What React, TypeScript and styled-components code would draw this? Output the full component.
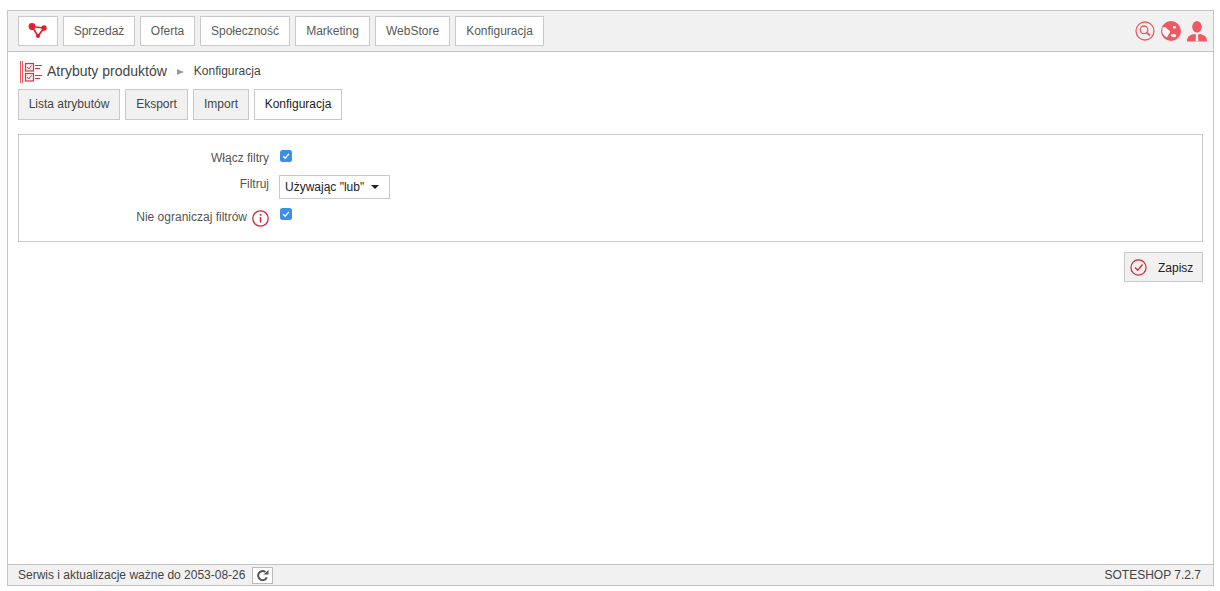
import React from 'react';
import styled, { createGlobalStyle } from 'styled-components';

const Global = createGlobalStyle`
  html, body { margin: 0; padding: 0; background: #fff; }
  body { font-family: "Liberation Sans", Arial, sans-serif; font-size: 12px; color: #4a4a4a; }
`;
const Frame = styled.div`
  box-sizing: border-box; width: 1207px; height: 576px; margin: 10px 0 0 7px;
  border: 1px solid #c4c4c4; display: flex; flex-direction: column;
`;
const Header = styled.header`
  box-sizing: border-box; height: 41px; flex: none; background: #f1f1f1; border-bottom: 1px solid #c4c4c4;
  display: flex; align-items: flex-start; padding: 5px 6px 0 10px; justify-content: space-between;
`;
const Nav = styled.nav`display: flex; gap: 5px;`;
const NavButton = styled.a<{ $w: number }>`
  box-sizing: border-box; width: ${p => p.$w}px; height: 30px; background: #fff; border: 1px solid #c9c9c9;
  display: flex; align-items: center; justify-content: center; font-size: 12px; color: #5a5a5a;
`;
const HeaderIcons = styled.div`display: flex; align-items: center; gap: 6px; height: 30px;`;
const Main = styled.main`flex: 1; padding: 9px 10px 0 10px; display: flex; flex-direction: column; min-height: 0;`;
const Crumbs = styled.div`display: flex; align-items: center; height: 22px; padding-left: 2px;`;
const Title = styled.span`font-size: 14px; color: #444; margin: 0 0 2px 4px;`;
const Sep = styled.span`width: 0; height: 0; border-left: 7px solid #999; border-top: 3.5px solid transparent; border-bottom: 3.5px solid transparent; margin: 0 10px 0 10px;`;
const Crumb = styled.span`font-size: 12px; color: #444; margin-bottom: 2px;`;
const Tabs = styled.div`display: flex; gap: 5px; margin-top: 6px;`;
const Tab = styled.a<{ $active?: boolean; $w: number }>`
  box-sizing: border-box; width: ${p => p.$w}px; height: 31px; padding-bottom: 2px; display: flex; align-items: center; justify-content: center;
  border: 1px solid #c9c9c9; background: ${p => (p.$active ? '#fff' : '#f1f1f1')}; color: ${p => (p.$active ? '#222' : '#444')}; font-size: 12px;
`;
const Panel = styled.section`
  box-sizing: border-box; height: 108px; margin-top: 14px; border: 1px solid #c9c9c9; padding: 14px 0 0 0;
  display: flex; flex-direction: column;
`;
const Row = styled.div<{ $h: number }>`display: grid; grid-template-columns: 250px 1fr; column-gap: 10px; height: ${p => p.$h}px;`;
const Label = styled.label<{ $top: number }>`display: flex; justify-content: flex-end; align-items: flex-start; gap: 5px; font-size: 12px; color: #555; padding-top: ${p => p.$top}px;`;
const Check = styled.span`
  width: 12px; height: 12px; border-radius: 2.5px; background: #3b8eea; display: flex; align-items: center; justify-content: center; margin: 1px 0 0 1px;
`;
const Select = styled.div`
  box-sizing: border-box; width: 111px; height: 24px; border: 1px solid #c9c9c9; background: #fff; color: #222; font-size: 12px;
  display: flex; align-items: center; padding-left: 5px; margin-top: -1px;
`;
const Caret = styled.span`width: 0; height: 0; border-top: 4px solid #222; border-left: 4px solid transparent; border-right: 4px solid transparent; margin-left: 7px;`;
const Actions = styled.div`display: flex; justify-content: flex-end; margin-top: 10px;`;
const SaveButton = styled.button`
  box-sizing: border-box; width: 79px; height: 30px; border: 1px solid #c9c9c9; background: #f1f1f1; color: #222; padding: 0 0 0 5px;
  display: flex; align-items: center; gap: 11px; font: 12px "Liberation Sans", Arial, sans-serif;
`;
const SaveLabel = styled.span`margin-top: 2px;`;
const Footer = styled.footer`
  box-sizing: border-box; height: 21px; flex: none; background: #f1f1f1; border-top: 1px solid #c4c4c4; padding: 0 12px 0 10px;
  display: flex; align-items: center; justify-content: space-between; font-size: 12px; color: #444;
`;
const FooterLeft = styled.div`display: flex; align-items: center; gap: 7px;`;
const RefreshButton = styled.span`
  box-sizing: border-box; width: 21px; height: 17px; background: #fff; border: 1px solid #bbb; display: flex; align-items: center; justify-content: center;
`;

const Tick = () => (
  <svg width="8" height="8" viewBox="0 0 8 8"><path d="M1.2 4.2 3.2 6.2 6.9 1.9" fill="none" stroke="#fff" strokeWidth="1.4" /></svg>
);
const Logo = () => (
  <svg width="20" height="16" viewBox="0 0 20 16">
    <path d="M4 3.5 16 5 10 13Z" fill="none" stroke="#e2202c" strokeWidth="1.6" />
    <circle cx="4" cy="3.5" r="3.4" fill="#e2202c" />
    <circle cx="16" cy="5" r="2.7" fill="#e2202c" />
    <circle cx="10" cy="13" r="2.1" fill="#e2202c" />
  </svg>
);
const Search = () => (
  <svg width="20" height="20" viewBox="0 0 20 20" fill="none" stroke="#ee5a63">
    <circle cx="10" cy="10" r="9" strokeWidth="1.3" />
    <circle cx="9" cy="8.8" r="3.8" strokeWidth="1.3" />
    <path d="M11.8 11.6 15 14.6" strokeWidth="2" />
  </svg>
);
const Globe = () => (
  <svg width="20" height="20" viewBox="0 0 20 20">
    <circle cx="10" cy="10" r="10" fill="#ee5a63" />
    <path d="M1.500 6.500C3 5.500 5 6 6 7.500s2.500 1.500 3 3-1 2-1.500 3-1 2-1.500 3C3.500 15 1.500 13 1.200 10.500Z" fill="#f7f7f7" />
    <path d="M10 13.500c2-1 3.500-.5 4.500 0s1 2-.5 2.500-3.500 0-4-1 0-1.500 0-1.500Z" fill="#f7f7f7" />
    <path d="M12 5.500c1-.8 2.500-.5 3 .5s-1 1.800-2 1.500-1.500-1.500-1-2Z" fill="#f7f7f7" />
  </svg>
);
const User = () => (
  <svg width="20" height="21" viewBox="0 0 20 21">
    <ellipse cx="10" cy="5.800" rx="4.800" ry="5.800" fill="#ee5a63" />
    <path d="M0 20.500c0-4.500 2-6.500 7-7.500l3 1 3-1c5 1 7 3 7 7.500Z" fill="#ee5a63" />
    <path d="M9 13.500h2l.4 7h-2.800Z" fill="#f7f7f7" />
  </svg>
);
const ListIcon = () => (
  <svg width="23" height="22" viewBox="0 0 23 22" fill="none" stroke="#e2303a">
    <path d="M.5 0v22M2.500 0v22" strokeWidth=".8" />
    <rect x="5.500" y="2.500" width="8" height="7.500" fill="#fdeaea" strokeWidth="1.200" />
    <rect x="5.500" y="12.500" width="8" height="7.500" fill="#fdeaea" strokeWidth="1.200" />
    <path d="M7 6 8.800 8 11.500 4.500M7 16 8.800 18 11.500 14.500" stroke="#666" />
    <path d="M15 4.500h7M15 7.500h5M15 14.500h7M15 17.500h5" strokeWidth="1.200" />
  </svg>
);
const InfoIcon = () => (
  <svg width="17" height="17" viewBox="0 0 17 17" fill="none" stroke="#d8232f">
    <circle cx="8.500" cy="8.500" r="7.700" strokeWidth="1.300" />
    <path d="M8.500 7v5.500" strokeWidth="1.500" />
    <path d="M8.500 4v1.700" strokeWidth="1.700" />
  </svg>
);
const SaveIcon = () => (
  <svg width="17" height="17" viewBox="0 0 17 17" fill="none" stroke="#d8232f">
    <circle cx="8.500" cy="8.500" r="7.600" strokeWidth="1.200" />
    <path d="M5 8.500 7.700 11.300 12.500 5.500" strokeWidth="1.300" />
  </svg>
);
const RefreshIcon = () => (
  <svg width="13" height="13" viewBox="0 0 13 13" fill="none">
    <path d="M10.800 8.300A4.500 4.500 0 1 1 9.300 3" stroke="#555" strokeWidth="2" />
    <path d="M7.500 5.500h5V1Z" fill="#555" />
  </svg>
);

const navItems: [string, number][] = [['Sprzedaż', 72], ['Oferta', 55], ['Społeczność', 90], ['Marketing', 75], ['WebStore', 75], ['Konfiguracja', 89]];
const tabs: [string, number, boolean][] = [['Lista atrybutów', 102, false], ['Eksport', 63, false], ['Import', 56, false], ['Konfiguracja', 88, true]];

export default function App() {
  return (
    <>
      <Global />
      <Frame>
        <Header>
          <Nav>
            <NavButton $w={40}><Logo /></NavButton>
            {navItems.map(([t, w]) => <NavButton key={t} $w={w}>{t}</NavButton>)}
          </Nav>
          <HeaderIcons><Search /><Globe /><User /></HeaderIcons>
        </Header>
        <Main>
          <Crumbs>
            <ListIcon />
            <Title>Atrybuty produktów</Title>
            <Sep />
            <Crumb>Konfiguracja</Crumb>
          </Crumbs>
          <Tabs>
            {tabs.map(([t, w, a]) => <Tab key={t} $w={w} $active={a}>{t}</Tab>)}
          </Tabs>
          <Panel>
            <Row $h={27}>
              <Label $top={2}>Włącz filtry</Label>
              <Check><Tick /></Check>
            </Row>
            <Row $h={31}>
              <Label $top={1}>Filtruj</Label>
              <Select>Używając "lub"<Caret /></Select>
            </Row>
            <Row $h={30}>
              <Label $top={3}>Nie ograniczaj filtrów <InfoIcon /></Label>
              <Check><Tick /></Check>
            </Row>
          </Panel>
          <Actions>
            <SaveButton><SaveIcon /><SaveLabel>Zapisz</SaveLabel></SaveButton>
          </Actions>
        </Main>
        <Footer>
          <FooterLeft>
            <span>Serwis i aktualizacje ważne do 2053-08-26</span>
            <RefreshButton><RefreshIcon /></RefreshButton>
          </FooterLeft>
          <span>SOTESHOP 7.2.7</span>
        </Footer>
      </Frame>
    </>
  );
}
